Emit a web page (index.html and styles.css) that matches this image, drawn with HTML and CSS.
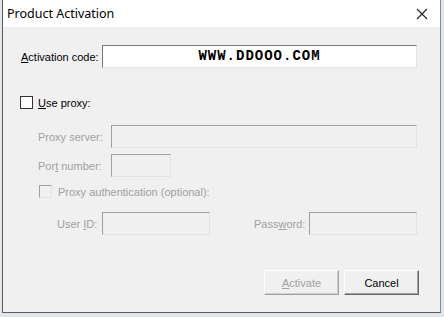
FILE: index.html
```html
<!DOCTYPE html>
<html lang="en">
<head>
    <meta charset="UTF-8">
    <title>Product Activation</title>
    <link rel="stylesheet" href="styles.css">
</head>
<body>
    <div class="window">
        <div class="titlebar">
            <span class="title">Product Activation</span>
            <svg class="close" width="12" height="12" viewBox="0 0 12 12">
                <path d="M1 1 L11 11 M11 1 L1 11" stroke="#222" stroke-width="1.1" fill="none"/>
            </svg>
        </div>
        <div class="content">
            <div class="row row-code">
                <label class="lbl lbl-code"><u>A</u>ctivation code:</label>
                <div class="field field-code">WWW.DDOOO.COM</div>
            </div>

            <div class="row row-proxy">
                <span class="check"></span>
                <label class="lbl"><u>U</u>se proxy:</label>
            </div>

            <div class="row row-server">
                <label class="lbl lbl-server off">Proxy server:</label>
                <div class="field field-off field-server"></div>
            </div>

            <div class="row row-port">
                <label class="lbl lbl-server off">Por<u>t</u> number:</label>
                <div class="field field-off field-port"></div>
            </div>

            <div class="row row-auth">
                <span class="check check-off"></span>
                <label class="lbl off">Proxy authentication (optional):</label>
            </div>

            <div class="row row-user">
                <label class="lbl lbl-user off">User <u>I</u>D:</label>
                <div class="field field-off field-small"></div>
                <label class="lbl lbl-pass off">Pass<u>w</u>ord:</label>
                <div class="field field-off field-small"></div>
            </div>

            <div class="buttons">
                <button class="btn btn-off" disabled><u>A</u>ctivate</button>
                <button class="btn">Cancel</button>
            </div>
        </div>
    </div>
</body>
</html>
```

FILE: styles.css
```css
body {
    margin: 0;
    background-color: #dfe6ec;
    font-family: 'Liberation Sans', Arial, sans-serif;
    font-size: 11px;
    color: #000;
}
.window {
    width: 439px;
    height: 313px;
    margin-left: 2px;
    border-left: 1px solid #5a5a5a;
    border-right: 1px solid #8a8a8a;
    border-bottom: 1px solid #5a5a5a;
    background-color: #f0f0f0;
    box-sizing: border-box;
}
.titlebar {
    height: 27px;
    background-color: white;
    display: flex;
    align-items: center;
    justify-content: space-between;
    padding: 0 12px 0 4px;
}
.title {
    font-family: 'Noto Sans', sans-serif;
    font-size: 12.5px;
    color: #000;
}
.close {
    display: block;
}
.content {
    padding-left: 17px;
}
.row {
    display: flex;
    align-items: center;
}
.lbl {
    white-space: nowrap;
}
.off {
    color: #a0a0a0;
}
.row-code {
    margin-top: 18px;
    height: 23px;
    padding-left: 1px;
}
.lbl-code {
    width: 81px;
}
.field {
    height: 23px;
    box-sizing: border-box;
    border-top: 1px solid #7a7a7a;
    border-left: 1px solid #7a7a7a;
    border-right: 1px solid #e3e3e3;
    border-bottom: 1px solid #e3e3e3;
    background-color: white;
}
.field-code {
    width: 315px;
    text-align: center;
    line-height: 21px;
    font-family: 'Liberation Mono', 'Courier New', monospace;
    font-weight: bold;
    font-size: 14px;
    letter-spacing: 1px;
}
.field-off {
    background-color: #f0f0f0;
    border-top-color: #a0a0a0;
    border-left-color: #a0a0a0;
}
.check {
    width: 13px;
    height: 13px;
    box-sizing: border-box;
    border: 1px solid #333;
    background-color: white;
    margin-right: 5px;
}
.check-off {
    border-top-color: #a0a0a0;
    border-left-color: #a0a0a0;
    border-right-color: #e3e3e3;
    border-bottom-color: #e3e3e3;
    background-color: #f0f0f0;
    margin-right: 6px;
}
.row-proxy {
    margin-top: 28px;
    height: 13px;
}
.row-server {
    margin-top: 16px;
    height: 23px;
    padding-left: 18px;
}
.lbl-server {
    width: 73px;
}
.field-server {
    width: 306px;
}
.row-port {
    margin-top: 6px;
    height: 23px;
    padding-left: 18px;
}
.field-port {
    width: 60px;
}
.row-auth {
    margin-top: 8px;
    height: 13px;
    padding-left: 19px;
}
.row-user {
    margin-top: 14px;
    height: 23px;
    padding-left: 37px;
}
.lbl-user {
    width: 45px;
}
.field-small {
    width: 108px;
}
.lbl-pass {
    margin-left: 44px;
    width: 55px;
}
.buttons {
    display: flex;
    justify-content: flex-end;
    gap: 5px;
    margin-top: 35px;
    padding-right: 21px;
}
.btn {
    width: 75px;
    height: 25px;
    box-sizing: border-box;
    font-family: 'Liberation Sans', Arial, sans-serif;
    font-size: 11px;
    background-color: #f0f0f0;
    border-top: 1px solid #fdfdfd;
    border-left: 1px solid #fdfdfd;
    border-right: 1px solid #696969;
    border-bottom: 1px solid #696969;
    box-shadow: inset -1px -1px 0 #a0a0a0;
    padding: 0;
    color: #000;
}
.btn-off {
    color: #a0a0a0;
    border-right-color: #a0a0a0;
    border-bottom-color: #a0a0a0;
    box-shadow: inset -1px -1px 0 #d0d0d0;
}
```
